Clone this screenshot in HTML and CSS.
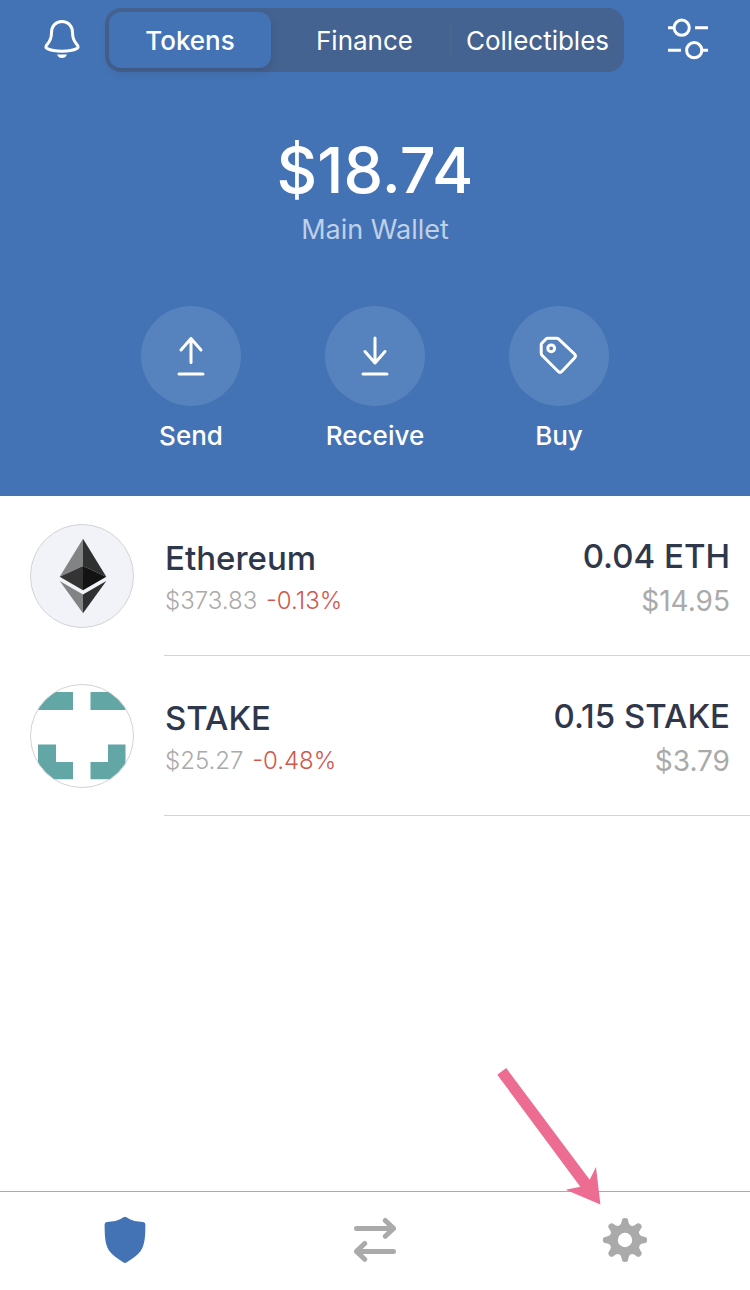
FILE: index.html
```html
<!DOCTYPE html>
<html lang="en">
<head>
<meta charset="utf-8">
<meta name="viewport" content="width=device-width, initial-scale=1">
<title>Main Wallet</title>
<link rel="stylesheet" href="styles.css">
</head>
<body class="app">
  <header class="hero">
    <div class="topbar">
      <button class="icon-button" type="button" aria-label="Notifications">
        <svg width="36" height="42" viewBox="0 0 36 42" fill="none" stroke="#fff" stroke-width="3" stroke-linejoin="round">
          <path d="M18 3.500C11.500 3.500 7.500 8.500 7.500 14.500C7.500 20 6.700 22.500 3.500 26C1.300 28.400 1.500 29.800 3.300 30.700C7 32.500 12 33.200 18 33.200S29 32.500 32.700 30.700C34.500 29.800 34.700 28.400 32.500 26C29.300 22.500 28.500 20 28.500 14.500C28.500 8.500 24.500 3.500 18 3.500Z"/>
          <path d="M13 36.500H23Q21.500 40 18 40T13 36.500Z" fill="#fff" stroke="none"/>
        </svg>
      </button>
      <nav class="segments" aria-label="Asset type">
        <button class="segment segment-active" type="button">Tokens</button>
        <button class="segment" type="button">Finance</button>
        <button class="segment segment-divided" type="button">Collectibles</button>
      </nav>
      <button class="icon-button" type="button" aria-label="Filter tokens">
        <svg width="40" height="42" viewBox="0 0 40 42" fill="none" stroke="#fff" stroke-width="3">
          <circle cx="13.700" cy="9.700" r="7.600"/>
          <circle cx="26.200" cy="32.200" r="7.600"/>
          <path d="M0 9.700H6M27 9.700H40M0 32.200H13M34 32.200H40"/>
        </svg>
      </button>
    </div>
    <h1 class="balance">$18.74</h1>
    <p class="wallet-name">Main Wallet</p>
    <div class="actions">
      <button class="action" type="button">
        <span class="action-disc">
          <svg width="28" height="40" viewBox="0 0 28 40" fill="none" stroke="#fff" stroke-width="3" stroke-linecap="round" stroke-linejoin="round">
            <path d="M14 2.500V26.500M4 14L14 2.500L24 14M2 38H26"/>
          </svg>
        </span>
        Send
      </button>
      <button class="action" type="button">
        <span class="action-disc">
          <svg width="28" height="40" viewBox="0 0 28 40" fill="none" stroke="#fff" stroke-width="3" stroke-linecap="round" stroke-linejoin="round">
            <path d="M14 2V27M4 15.500L14 27L24 15.500M2 38H26"/>
          </svg>
        </span>
        Receive
      </button>
      <button class="action" type="button">
        <span class="action-disc">
          <svg width="40" height="40" viewBox="0 0 40 40" fill="none" stroke="#fff" stroke-width="3" stroke-linejoin="round">
            <path d="M8.500 2.300H17.500Q19 2.300 20 3.300L35.500 18Q37.500 20 35.500 22L23 35.300Q21 37.300 19 35.300L3.200 19.500Q2.200 18.500 2.200 17V8.800Q2.200 8 2.800 7.300L7 3Q7.700 2.300 8.500 2.300Z"/>
            <circle cx="12.200" cy="12.300" r="3.400"/>
          </svg>
        </span>
        Buy
      </button>
    </div>
  </header>

  <main class="assets">
    <ul class="asset-list">
      <li class="asset">
        <svg class="asset-logo" width="104" height="104" viewBox="0 0 104 104">
          <circle cx="52" cy="52" r="51.500" fill="#f1f3f8" stroke="#d3d3d5"/>
          <path d="M53 14.700L29.700 52.700L53 42Z" fill="#828384"/>
          <path d="M53 14.700L76.300 52.700L53 42Z" fill="#2f3030"/>
          <path d="M53 42L29.700 52.700L53 66.200Z" fill="#343434"/>
          <path d="M53 42L76.300 52.700L53 66.200Z" fill="#131313"/>
          <path d="M29.700 57L53 70.500V89.200Z" fill="#828384"/>
          <path d="M76.300 57L53 70.500V89.200Z" fill="#2f3030"/>
        </svg>
        <div class="asset-body">
          <div class="asset-info">
            <h2 class="asset-title">Ethereum</h2>
            <p class="asset-price">$373.83 <span class="change">-0.13%</span></p>
          </div>
          <div class="asset-holding">
            <p class="asset-title">0.04 ETH</p>
            <p class="asset-value">$14.95</p>
          </div>
        </div>
      </li>
      <li class="asset">
        <svg class="asset-logo" width="104" height="104" viewBox="0 0 104 104">
          <clipPath id="disc"><circle cx="52" cy="52" r="51.500"/></clipPath>
          <circle cx="52" cy="52" r="51.500" fill="#fff"/>
          <path clip-path="url(#disc)" fill="#62a6a5" d="M8 8H43V26H8ZM60.500 8H95.500V26H60.500ZM8 60.500H26V78H43V95.300H8ZM78 60.500H95.500V95.300H60.500V78H78Z"/>
          <circle cx="52" cy="52" r="51.500" fill="none" stroke="#d3d3d5"/>
        </svg>
        <div class="asset-body">
          <div class="asset-info">
            <h2 class="asset-title">STAKE</h2>
            <p class="asset-price">$25.27 <span class="change">-0.48%</span></p>
          </div>
          <div class="asset-holding">
            <p class="asset-title">0.15 STAKE</p>
            <p class="asset-value">$3.79</p>
          </div>
        </div>
      </li>
    </ul>
  </main>

  <nav class="tabbar" aria-label="Main">
    <button class="tab" type="button" aria-label="Wallet">
      <svg width="42" height="48" viewBox="0 0 42 48" fill="#4473b5">
        <path d="M19.500 1.300Q21 .4 22.500 1.300C28 5 33 5.800 39 5.900Q41.400 6.200 41.400 8.500C41.300 20 41 28 37 34.500C33.500 39.500 28 42.500 22.500 46.500Q21 47.400 19.500 46.500C14 42.500 8.500 39.500 5 34.500C1 28 .7 20 .6 8.500Q.6 6.200 3 5.900C9 5.800 14 5 19.500 1.300Z"/>
      </svg>
    </button>
    <button class="tab" type="button" aria-label="Exchange">
      <svg width="44" height="46" viewBox="0 0 44 46" fill="none" stroke="#aaa" stroke-width="5" stroke-linecap="round" stroke-linejoin="round">
        <path d="M3.500 11.400H40.500M32.300 3.500L40.500 11.400L32.300 19.300M40.500 34.400H3.500M11.700 26.500L3.500 34.400L11.700 42.300"/>
      </svg>
    </button>
    <button class="tab" type="button" aria-label="Settings">
      <svg width="46" height="46" viewBox="-23 -23 46 46" fill="#aaa">
        <defs><path id="tooth" d="M-5.900-14.300Q-3.600-15.250-3.300-18.800A3.300 3.300 0 0 1 3.300-18.800Q3.600-15.250 5.900-14.300L5-11H-5Z"/></defs>
        <circle r="11.200" fill="none" stroke="#aaa" stroke-width="8"/>
        <use href="#tooth"/>
        <use href="#tooth" transform="rotate(45)"/>
        <use href="#tooth" transform="rotate(90)"/>
        <use href="#tooth" transform="rotate(135)"/>
        <use href="#tooth" transform="rotate(180)"/>
        <use href="#tooth" transform="rotate(225)"/>
        <use href="#tooth" transform="rotate(270)"/>
        <use href="#tooth" transform="rotate(315)"/>
      </svg>
      <svg class="pointer" width="104" height="137" viewBox="0 0 104 137" fill="#ec6c92" aria-hidden="true">
        <path d="M9.200 0L.3 6.700L83.300 118.700L68.700 121.700L103.400 136.400L99 99L92.700 111.700Z"/>
      </svg>
    </button>
  </nav>
</body>
</html>
```
FILE: styles.css
```css
* {
  box-sizing: border-box;
  margin: 0;
  padding: 0;
}

.app {
  display: flex;
  flex-direction: column;
  min-height: 100vh;
  background: #fff;
  color: #2f374b;
  font-family: Inter, "Liberation Sans", sans-serif;
}

button {
  border: 0;
  background: none;
  color: inherit;
  font: inherit;
  cursor: pointer;
}

svg {
  display: block;
}

.hero {
  padding: 8px 0 40px;
  background: #4473b5;
  color: #fff;
  text-align: center;
}

.topbar {
  display: flex;
  align-items: center;
}

.icon-button {
  display: flex;
  flex: none;
  justify-content: flex-end;
  width: 105px;
  padding: 0 25px 2px 0;
}

.segments + .icon-button {
  justify-content: flex-start;
  width: 126px;
  padding: 0 0 2px 44px;
}

.segments {
  display: grid;
  flex: 1;
  grid-template-columns: repeat(3, 1fr);
  height: 64px;
  border-radius: 16px;
  background: #456390;
}

.segment {
  position: relative;
  padding-top: 1px;
  font-size: 26px;
  line-height: 32px;
}

.segment-active {
  margin: 4px 7px 4px 4px;
  border-radius: 12px;
  background: #4473b5;
  box-shadow: 0 4px 10px rgba(0, 0, 0, 0.12);
  font-weight: 500;
}

.segment-divided::before {
  position: absolute;
  top: 14px;
  bottom: 14px;
  left: -1px;
  width: 1px;
  background: #4d6890;
  content: "";
}

.balance {
  margin-top: 58px;
  font-size: 63px;
  font-weight: 500;
  line-height: 80px;
}

.wallet-name {
  color: #bfd0e7;
  font-size: 27px;
  line-height: 40px;
}

.actions {
  display: flex;
  justify-content: center;
  gap: 84px;
  margin-top: 56px;
}

.action {
  display: flex;
  flex-direction: column;
  gap: 10px;
  align-items: center;
  width: 100px;
  font-size: 26px;
  font-weight: 500;
  line-height: 40px;
}

.action-disc {
  display: flex;
  align-items: center;
  justify-content: center;
  width: 100px;
  height: 100px;
  border-radius: 50%;
  background: #5682bd;
}

.assets {
  flex: 1;
}

.asset-list {
  list-style: none;
}

.asset {
  display: flex;
  gap: 30px;
  align-items: center;
  padding-left: 30px;
}

.asset-logo {
  flex: none;
}

.asset-body {
  display: flex;
  flex: 1;
  justify-content: space-between;
  height: 160px;
  padding: 40px 20px 0 1px;
  border-bottom: 1px solid #d4d4d4;
}

.asset-title {
  font-size: 33px;
  font-weight: 500;
  line-height: 44px;
}

.asset-price {
  color: #aaa;
  font-size: 24px;
  font-weight: 300;
  line-height: 42px;
}

.change {
  margin-left: 2px;
  color: #d0584b;
}

.asset-holding {
  margin-top: -2px;
  text-align: right;
}

.asset-value {
  color: #aaa;
  font-size: 28px;
  line-height: 46px;
}

.tabbar {
  display: grid;
  grid-template-columns: repeat(3, 1fr);
  height: 99px;
  border-top: 1px solid #aaa;
}

.tab {
  position: relative;
  display: flex;
  align-items: center;
  justify-content: center;
  padding-bottom: 2px;
}

.pointer {
  position: absolute;
  right: calc(50% + 24px);
  bottom: 85px;
}
```
